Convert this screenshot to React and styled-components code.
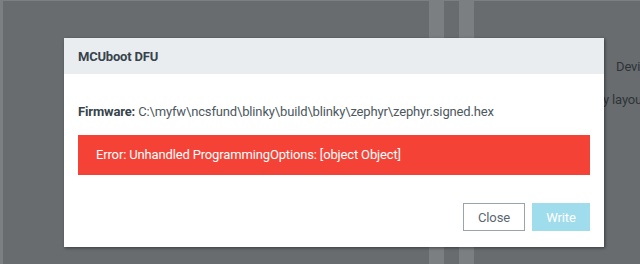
import styled, { createGlobalStyle } from 'styled-components';

const GlobalStyle = createGlobalStyle`
    html, body {
        margin: 0;
        padding: 0;
        background: #686c6f;
        font-family: Roboto, "Liberation Sans", Arial, sans-serif;
    }
`;

const App = () => {
    return (
        <Page>
            <GlobalStyle />
            <AppBehind>
                <LeftEdge />
                <Divider $left={429} />
                <Divider $left={459} />
                <SideText $top={56} $left={616}>Device</SideText>
                <SideText $top={89} $left={603}>y layout</SideText>
            </AppBehind>
            <Backdrop>
                <Modal>
                    <Header>
                        <Title>MCUboot DFU</Title>
                    </Header>
                    <Body>
                        <FirmwareLine>
                            <Label>Firmware:</Label> C:\myfw\ncsfund\blinky\build\blinky\zephyr\zephyr.signed.hex
                        </FirmwareLine>
                        <ErrorBox>Error: Unhandled ProgrammingOptions: [object Object]</ErrorBox>
                    </Body>
                    <Footer>
                        <Button>Close</Button>
                        <Button $primary disabled>Write</Button>
                    </Footer>
                </Modal>
            </Backdrop>
        </Page>
    );
}

export default App;

const Page = styled.div`
    position: relative;
    width: 640px;
    height: 264px;
    overflow: hidden;
`;

const AppBehind = styled.div`
    position: absolute;
    inset: 0;
    background: #686c6f;
    border-top: 1px solid #7b7f82;
`;

const LeftEdge = styled.div`
    position: absolute;
    left: 0;
    top: 0;
    bottom: 0;
    width: 3px;
    background: #7b7f82;
`;

const Divider = styled.div`
    position: absolute;
    top: 0;
    bottom: 0;
    left: ${p => p.$left}px;
    width: 15px;
    background: #7c7f82;
`;

const SideText = styled.div`
    position: absolute;
    top: ${p => p.$top}px;
    left: ${p => p.$left}px;
    font-size: 13px;
    letter-spacing: -0.15px;
    line-height: 20px;
    color: #2f3437;
    white-space: nowrap;
`;

const Backdrop = styled.div`
    position: absolute;
    inset: 0;
    padding: 38px 0 0 64px;
`;

const Modal = styled.div`
    width: 540px;
    height: 209px;
    background: #ffffff;
    box-shadow: 1px 1px 3px rgba(0, 0, 0, 0.45);
    display: flex;
    flex-direction: column;
`;

const Header = styled.div`
    height: 36px;
    background: #e9edf0;
    display: flex;
    align-items: center;
    padding: 0 14px;
`;

const Title = styled.div`
    font-size: 13px;
    letter-spacing: -0.2px;
    font-weight: 700;
    color: #37434b;
`;

const Body = styled.div`
    padding: 28px 14px 0;
    display: flex;
    flex-direction: column;
    gap: 13px;
`;

const FirmwareLine = styled.div`
    font-size: 13px;
    letter-spacing: -0.15px;
    line-height: 20px;
    color: #4d5860;
    white-space: nowrap;
`;

const Label = styled.span`
    font-weight: 700;
    color: #37434b;
`;

const ErrorBox = styled.div`
    background: #f44336;
    color: #ffffff;
    font-size: 13px;
    letter-spacing: -0.15px;
    line-height: 20px;
    padding: 10px 18px 10px;
`;

const Footer = styled.div`
    display: flex;
    justify-content: flex-end;
    gap: 7px;
    padding: 28px 14px 0;
`;

const Button = styled.button`
    height: 28px;
    width: ${p => (p.$primary ? '58px' : '62px')};
    padding: 0;
    font-family: inherit;
    font-size: 13px;
    letter-spacing: -0.15px;
    border: 1px solid ${p => (p.$primary ? '#9fdcec' : '#9aa4ab')};
    background: ${p => (p.$primary ? '#9fdcec' : '#ffffff')};
    color: ${p => (p.$primary ? '#ffffff' : '#5b676e')};
    border-radius: 0;
    cursor: pointer;
`;
